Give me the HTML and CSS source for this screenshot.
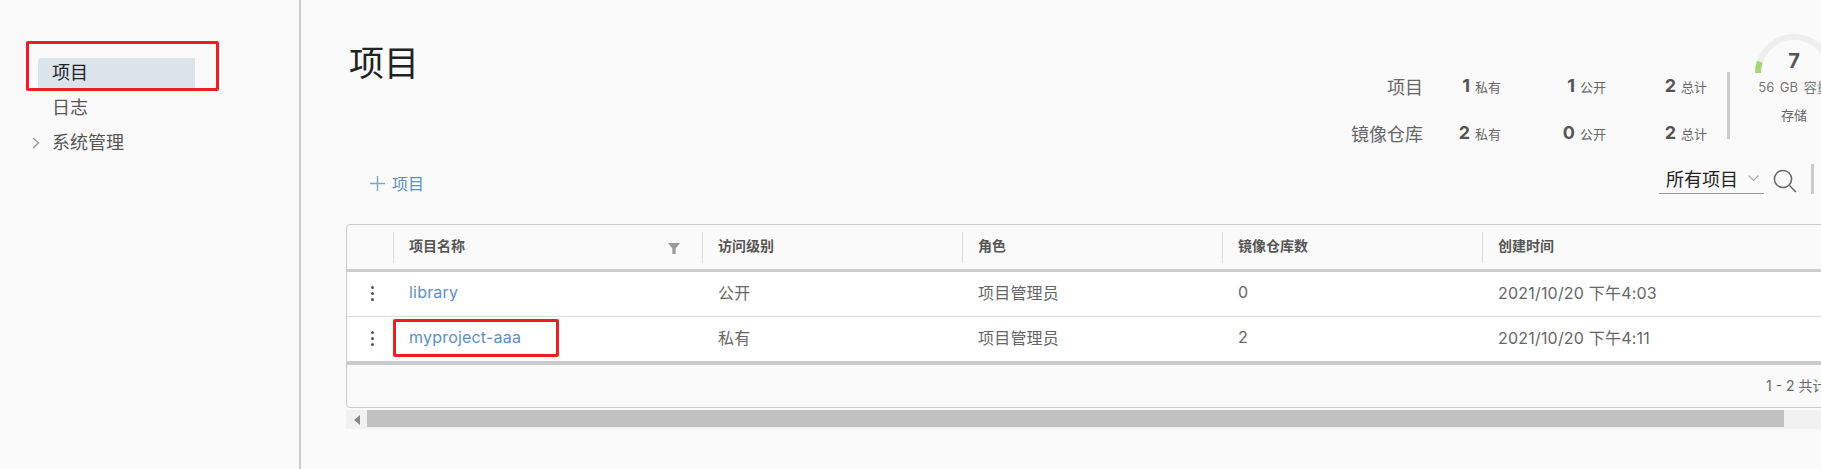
FILE: index.html
```html
<!DOCTYPE html>
<html lang="zh">
<head>
  <meta charset="UTF-8" />
  <title>项目</title>
  <link rel="stylesheet" href="styles.css">
</head>
<body>

  <!-- Sidebar -->
  <div class="sidebar">
    <div class="nav-item active">项目</div>
    <div class="nav-item">日志</div>
    <div class="nav-item">
      <svg class="nav-arrow" width="8" height="12" viewBox="0 0 8 12"><path d="M1 1l5.5 5L1 11" fill="none" stroke="#999" stroke-width="1.3"/></svg>
      系统管理
    </div>
  </div>

  <!-- Main -->
  <div class="main">
    <div class="page-head">
      <h1 class="page-title">项目</h1>
      <div class="stats">
        <div class="stat-label">项目</div>
        <div class="stat"><b>1</b>私有</div>
        <div class="stat"><b>1</b>公开</div>
        <div class="stat"><b>2</b>总计</div>
        <div class="stat-label">镜像仓库</div>
        <div class="stat"><b>2</b>私有</div>
        <div class="stat"><b>0</b>公开</div>
        <div class="stat"><b>2</b>总计</div>
      </div>
      <div class="stats-divider"></div>
      <div class="storage">
        <svg class="gauge" width="84" height="44" viewBox="0 0 84 44">
          <path d="M6 42a36 36 0 0 1 72 0" fill="none" stroke="#eee" stroke-width="6"/>
          <path d="M6 42a36 36 0 0 1 1.8 -11.2" fill="none" stroke="#a8d676" stroke-width="6"/>
        </svg>
        <div class="gauge-num">7</div>
        <div class="storage-size">56 GB 容量</div>
        <div class="storage-name">存储</div>
      </div>
    </div>

    <div class="toolbar">
      <div class="add-btn">
        <svg width="15" height="15" viewBox="0 0 15 15"><path d="M7.5 0v15M0 7.5h15" stroke="#7ba7cc" stroke-width="1.4"/></svg>
        项目
      </div>
      <div class="filter">
        <div class="filter-select">所有项目
          <svg width="11" height="7" viewBox="0 0 11 7"><path d="M.5 .5l5 5 5-5" fill="none" stroke="#aaa" stroke-width="1.1"/></svg>
        </div>
        <svg class="search-icon" width="24" height="24" viewBox="0 0 24 24"><circle cx="10" cy="10" r="8.6" fill="none" stroke="#666" stroke-width="1.5"/><path d="M16.5 16.5l6.5 6.5" stroke="#666" stroke-width="1.5"/></svg>
        <div class="filter-divider"></div>
      </div>
    </div>

    <!-- Project table -->
    <div class="table">
      <div class="row head">
        <div class="cell cell-menu"></div>
        <div class="cell">项目名称
          <svg class="filter-icon" width="12" height="11" viewBox="0 0 11 10"><path d="M0 0h11L7 5v5H4V5z" fill="#999"/></svg>
        </div>
        <div class="cell">访问级别</div>
        <div class="cell">角色</div>
        <div class="cell">镜像仓库数</div>
        <div class="cell">创建时间</div>
      </div>
      <div class="row body-row">
        <div class="cell cell-menu"><span class="dots"><i></i><i></i><i></i></span></div>
        <div class="cell"><a class="link">library</a></div>
        <div class="cell">公开</div>
        <div class="cell">项目管理员</div>
        <div class="cell">0</div>
        <div class="cell">2021/10/20 下午4:03</div>
      </div>
      <div class="row body-row last">
        <div class="cell cell-menu"><span class="dots"><i></i><i></i><i></i></span></div>
        <div class="cell"><a class="link">myproject-aaa</a></div>
        <div class="cell">私有</div>
        <div class="cell">项目管理员</div>
        <div class="cell">2</div>
        <div class="cell">2021/10/20 下午4:11</div>
      </div>
      <div class="table-foot">1 - 2 共计 2 条记录</div>
    </div>

    <div class="scrollbar">
      <div class="scroll-btn"><svg width="6" height="10" viewBox="0 0 6 10"><path d="M6 0v10L0 5z" fill="#888"/></svg></div>
      <div class="scroll-thumb"></div>
    </div>
  </div>

  <!-- Red annotation boxes -->
  <div class="mark mark-nav"></div>
  <div class="mark mark-name"></div>

</body>
</html>
```
FILE: styles.css
```css
html, body {
  height: 100%;
}
body {
  margin: 0;
  display: flex;
  overflow: hidden;
  position: relative;
  background: #fafafa;
  color: #565656;
  font-family: Inter, "Noto Sans CJK SC", sans-serif;
  font-size: 16px;
}
.sidebar {
  width: 301px;
  flex: none;
  box-sizing: border-box;
  padding: 58px 0 0 38px;
  border-right: 2px solid #ccc;
}
.nav-item {
  position: relative;
  width: 157px;
  height: 35px;
  line-height: 29px;
  padding-left: 14px;
  box-sizing: border-box;
  font-size: 18px;
  color: #555;
}
.nav-item.active {
  height: 30px;
  margin-bottom: 5px;
  background: #dce4eb;
  border-radius: 3px 0 0 0;
  color: #222;
}
.nav-arrow {
  position: absolute;
  left: -6px;
  top: 9px;
}
.main {
  flex: 1;
  min-width: 0;
  padding-left: 45px;
  overflow: hidden;
}
.page-head {
  display: flex;
  width: 1512px;
  height: 165px;
}
.page-title {
  margin: 41px 0 0 3px;
  font-size: 35px;
  font-weight: 400;
  line-height: 44px;
  color: #222;
  flex: 1;
}
.stats {
  display: grid;
  grid-template-columns: 102px 78px 105px 101px;
  grid-auto-rows: 47px;
  margin-top: 62px;
  height: 94px;
  align-items: center;
  justify-items: end;
}
.stat-label {
  font-size: 18px;
  color: #666;
  white-space: nowrap;
}
.stat {
  font-size: 13px;
  color: #666;
  white-space: nowrap;
}
.stat b {
  font-size: 18px;
  margin-right: 5px;
  color: #555;
}
.stats-divider {
  width: 3px;
  height: 67px;
  margin: 72px 0 0 20px;
  background: #ccc;
}
.storage {
  position: relative;
  flex: none;
  width: 128px;
  padding-top: 78px;
  text-align: center;
  box-sizing: border-box;
}
.gauge {
  position: absolute;
  left: 22px;
  top: 31px;
}
.gauge-num {
  position: absolute;
  left: 0;
  right: 0;
  top: 47px;
  font-size: 20px;
  line-height: 28px;
  font-weight: 700;
  color: #555;
}
.storage-size {
  font-size: 13px;
  line-height: 18px;
  color: #777;
  white-space: nowrap;
  word-spacing: 2px;
}
.storage-name {
  margin-top: 10px;
  font-size: 13px;
  line-height: 18px;
  color: #666;
}
.toolbar {
  display: flex;
  justify-content: space-between;
  align-items: center;
  width: 1468px;
  height: 36px;
  margin-bottom: 23px;
}
.add-btn {
  display: flex;
  align-items: center;
  gap: 7px;
  margin-left: 24px;
  font-size: 16px;
  color: #5b8fbd;
}
.filter {
  display: flex;
  align-items: center;
  margin-top: -9px;
}
.filter-select {
  display: flex;
  align-items: center;
  gap: 10px;
  width: 105px;
  height: 31px;
  padding-left: 7px;
  box-sizing: border-box;
  border-bottom: 1px solid #999;
  font-size: 18px;
  color: #222;
}
.search-icon {
  margin: 4px 0 0 9px;
}
.filter-divider {
  width: 3px;
  height: 30px;
  margin-left: 14px;
  background: #ccc;
}
.table {
  width: 1700px;
  box-sizing: border-box;
  border: 1px solid #ccc;
  border-radius: 4px 0 0 4px;
  background: #fafafa;
}
.row {
  display: grid;
  grid-template-columns: 46px 309px 260px 260px 260px 1fr;
  align-items: center;
}
.head {
  height: 44px;
  border-bottom: 3px solid #ccc;
  font-size: 14px;
  font-weight: 700;
  color: #565656;
}
.head .cell {
  height: 31px;
  line-height: 27px;
  position: relative;
  border-left: 1px solid #ddd;
  padding-left: 15px;
}
.head .cell-menu {
  border-left: none;
}
.filter-icon {
  position: absolute;
  left: 274px;
  top: 11px;
}
.body-row {
  height: 44px;
  background: #fff;
  border-bottom: 1px solid #ddd;
  font-size: 16px;
  letter-spacing: .2px;
  color: #666;
}
.body-row.last {
  border-bottom: 4px solid #ccc;
}
.body-row .cell {
  padding: 0 0 4px 16px;
  white-space: nowrap;
}
.body-row .cell-menu {
  padding: 0 0 2px 4px;
  display: flex;
  justify-content: center;
}
.dots {
  display: flex;
  flex-direction: column;
  gap: 3px;
}
.dots i {
  display: block;
  width: 3px;
  height: 3px;
  border-radius: 50%;
  background: #555;
}
.link {
  color: #5b8fc9;
}
.table-foot {
  height: 42px;
  line-height: 42px;
  padding-left: 1419px;
  box-sizing: border-box;
  font-size: 14px;
  color: #666;
  white-space: nowrap;
}
.scrollbar {
  display: flex;
  width: 1480px;
  height: 19px;
  margin-top: 2px;
  background: #f1f1f1;
}
.scroll-btn {
  width: 21px;
  display: flex;
  align-items: center;
  justify-content: center;
}
.scroll-thumb {
  width: 1417px;
  height: 17px;
  background: #c1c1c1;
}
.mark {
  position: absolute;
  box-sizing: border-box;
  border: 3px solid #ee1c25;
  border-radius: 2px;
}
.mark-nav {
  left: 26px;
  top: 41px;
  width: 193px;
  height: 50px;
}
.mark-name {
  left: 393px;
  top: 319px;
  width: 166px;
  height: 38px;
}
```
